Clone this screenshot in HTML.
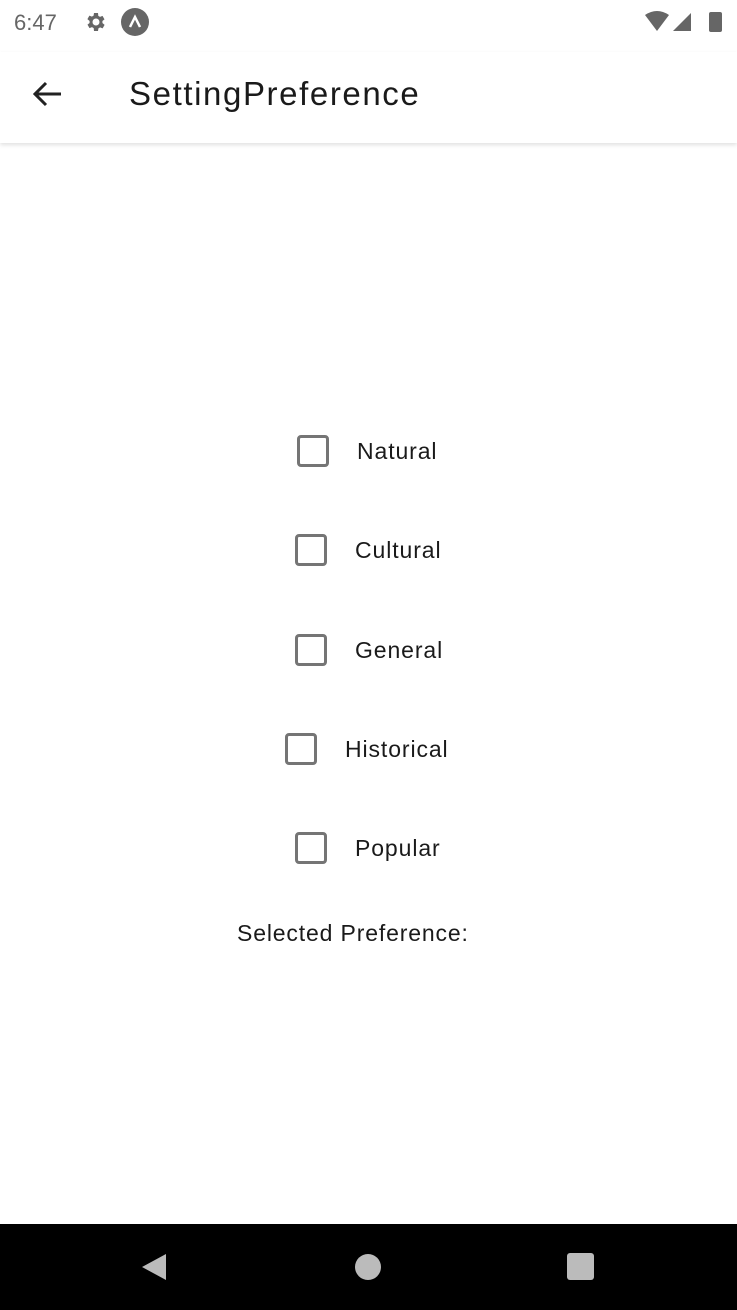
<!DOCTYPE html>
<html><head><meta charset="utf-8"><style>
body{margin:0;width:737px;height:1310px;position:relative;background:#fff;font-family:"Liberation Sans",sans-serif;overflow:hidden}
.a{position:absolute}
.cb{position:absolute;width:26px;height:26px;border:3px solid #757575;border-radius:4px}
.t{position:absolute;font-size:23px;color:#1a1a1a;line-height:30px;letter-spacing:0.9px}
</style></head><body>
<div class="a" style="left:14px;top:10px;font-size:22px;color:#666">6:47</div>
<svg class="a" style="left:83px;top:10px" width="24" height="24" viewBox="0 0 24 24"><path fill="#666" d="M19.4 13a7.5 7.5 0 0 0 0-2l2.1-1.6-2-3.5-2.5 1a7 7 0 0 0-1.7-1L15 3h-4l-.4 2.6a7 7 0 0 0-1.7 1l-2.5-1-2 3.5L6.6 11a7.5 7.5 0 0 0 0 2l-2.1 1.6 2 3.5 2.5-1a7 7 0 0 0 1.7 1L11 21h4l.4-2.6a7 7 0 0 0 1.7-1l2.5 1 2-3.5zM13 15.5a3.5 3.5 0 1 1 0-7 3.5 3.5 0 0 1 0 7z"/></svg>
<svg class="a" style="left:121px;top:8px" width="28" height="28" viewBox="0 0 28 28"><circle cx="14" cy="14" r="14" fill="#666"/><path d="M9 19l5-10 5 10" stroke="#fff" stroke-width="2.5" fill="none"/></svg>
<svg class="a" style="left:645px;top:10px" width="80" height="24" viewBox="0 0 80 24"><path fill="#666" d="M0 5Q12-3 24 5L12 21z"/><path fill="#666" d="M28 21L46 3v18z"/><rect x="64" y="2" width="13" height="20" rx="2" fill="#666"/></svg>
<div class="a" style="left:0;top:52px;width:737px;height:91px;background:#fff;box-shadow:0 2px 4px rgba(0,0,0,.12)"></div>
<svg class="a" style="left:31px;top:80px" width="32" height="28" viewBox="0 0 32 28"><path d="M30 14H4M15 3L4 14l11 11" stroke="#222" stroke-width="3" fill="none"/></svg>
<div class="a" style="left:129px;top:75px;font-size:33px;color:#1a1a1a;letter-spacing:1.6px">SettingPreference</div>
<div class="cb" style="left:297px;top:435px"></div><div class="t" style="left:357px;top:436px">Natural</div>
<div class="cb" style="left:295px;top:534px"></div><div class="t" style="left:355px;top:535px">Cultural</div>
<div class="cb" style="left:295px;top:634px"></div><div class="t" style="left:355px;top:635px">General</div>
<div class="cb" style="left:285px;top:733px"></div><div class="t" style="left:345px;top:734px">Historical</div>
<div class="cb" style="left:295px;top:832px"></div><div class="t" style="left:355px;top:833px">Popular</div>
<div class="t" style="left:237px;top:918px;letter-spacing:0.85px">Selected Preference:</div>
<div class="a" style="left:0;top:1224px;width:737px;height:86px;background:#000"></div>
<svg class="a" style="left:140px;top:1252px" width="30" height="30" viewBox="0 0 30 30"><path d="M26 2v26L2 15z" fill="#bbb"/></svg>
<div class="a" style="left:355px;top:1254px;width:26px;height:26px;border-radius:50%;background:#bbb"></div>
<div class="a" style="left:567px;top:1253px;width:27px;height:27px;border-radius:3px;background:#bbb"></div>
</body></html>
